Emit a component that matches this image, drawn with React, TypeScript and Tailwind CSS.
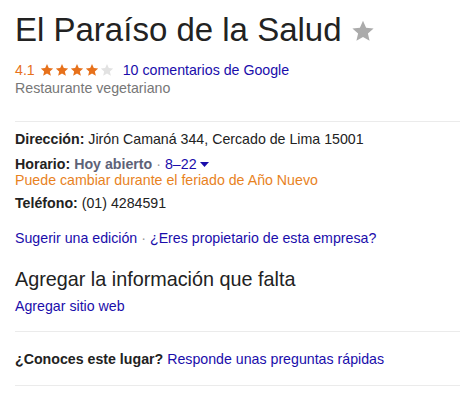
import React from "react"

const link = "text-[#1a0dab]"

function Star({ fill, size = 14 }: { fill: string; size?: number }) {
  return (
    <svg width={size} height={size} viewBox="0 0 24 24" className="inline-block">
      <path
        fill={fill}
        d="M12 1.8l3.1 6.9 7.5.7-5.7 5 1.7 7.4L12 17.9l-6.6 3.9 1.7-7.4-5.7-5 7.5-.7z"
      />
    </svg>
  )
}

function Divider() {
  return <div className="h-px bg-[#ebebeb]" />
}

export default function App() {
  return (
    <div className="pl-[15px] text-[#222] font-['Arial','Liberation_Sans',sans-serif] bg-white min-h-[402px]">
      {/* Title */}
      <div className="pt-[11px] flex items-center">
        <h1 className="text-[33px] leading-[38px] font-normal text-[#222]">El Paraíso de la Salud</h1>
        <span className="ml-[9px] mt-[2px]">
          <Star fill="#ababab" size={24} />
        </span>
      </div>

      {/* Rating */}
      <div className="mt-[12px] text-[14.2px] leading-[18px] flex items-center">
        <span className="text-[#e7711b]">4.1</span>
        <span className="ml-[5px] flex items-center gap-[1px]">
          <Star fill="#e7711b" />
          <Star fill="#e7711b" />
          <Star fill="#e7711b" />
          <Star fill="#e7711b" />
          <Star fill="#e2e2e2" />
        </span>
        <a className={`${link} ml-[9px]`}>10 comentarios de Google</a>
      </div>
      <div className="text-[14.2px] leading-[18px] text-[#777]">Restaurante vegetariano</div>

      <div className="mt-[24px]">
        <Divider />
      </div>

      {/* Details */}
      <div className="text-[14.2px] leading-[16px]">
        <div className="mt-[9px]">
          <span className="font-bold">Dirección:</span> Jirón Camaná 344, Cercado de Lima 15001
        </div>
        <div className="mt-[9px] flex items-center">
          <span className="font-bold">Horario:</span>
          <span className="ml-[4px] font-bold text-[#5e6278]">Hoy abierto</span>
          <span className="mx-[4px] text-[#999]">·</span>
          <span className={link}>8–22</span>
          <svg width="9" height="5" viewBox="0 0 9 5" className="ml-[3px]">
            <path d="M0 0h9L4.5 5z" fill="#1a0dab" />
          </svg>
        </div>
        <div className="text-[#e8821e]">Puede cambiar durante el feriado de Año Nuevo</div>
        <div className="mt-[7px]">
          <span className="font-bold">Teléfono:</span> (01) 4284591
        </div>
        <div className="mt-[19px]">
          <a className={link}>Sugerir una edición</a>
          <span className="mx-[4px] text-[#999]">·</span>
          <a className={link}>¿Eres propietario de esta empresa?</a>
        </div>
      </div>

      {/* Missing info */}
      <div className="mt-[21px] text-[19.8px] leading-[24px] text-[#222]">Agregar la información que falta</div>
      <div className="mt-[7px] text-[14.2px] leading-[16px]">
        <a className={link}>Agregar sitio web</a>
      </div>

      <div className="mt-[17px]">
        <Divider />
      </div>

      <div className="mt-[19px] text-[14.2px] leading-[16px]">
        <span className="font-bold">¿Conoces este lugar?</span> <a className={link}>Responde unas preguntas rápidas</a>
      </div>

      <div className="mt-[18px]">
        <Divider />
      </div>
    </div>
  )
}
